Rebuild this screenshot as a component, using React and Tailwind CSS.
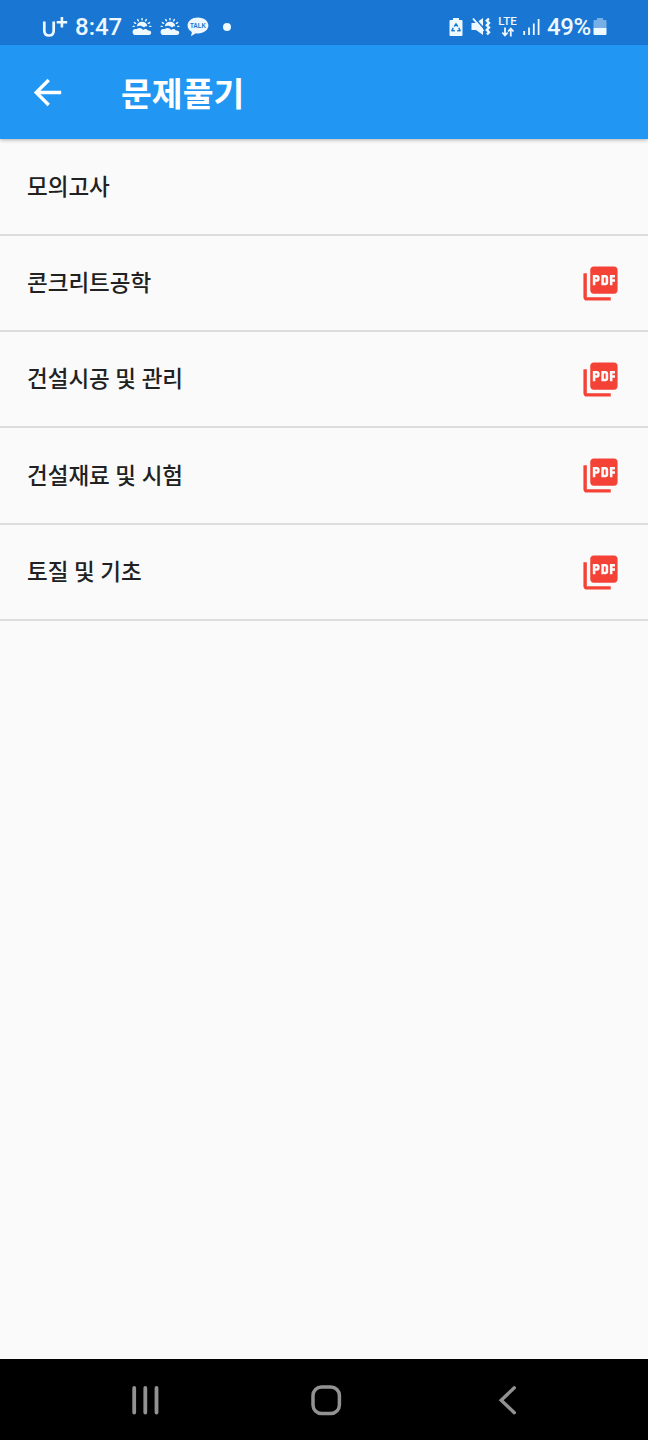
import { MdArrowBack, MdPictureAsPdf } from "react-icons/md";

const subjects = [
  { title: "모의고사", pdf: false, size: "h-[97px]" },
  { title: "콘크리트공학", pdf: true, size: "h-[96px]" },
  { title: "건설시공 및 관리", pdf: true, size: "h-[96px]" },
  { title: "건설재료 및 시험", pdf: true, size: "h-[97px]" },
  { title: "토질 및 기초", pdf: true, size: "h-[96px]" },
];

function Weather() {
  return (
    <svg className="h-[18px] w-[20px]" viewBox="0 0 20 18" fill="none">
      <path d="M4.800 8.400a5.300 5.300 0 0 1 10.500 0c-1.500-.2-2.500.3-3.300 1.200-2-2-4.700-2.200-7.200-1.200z" fill="#eef8ff" />
      <path d="M10 .5v1.300M5.700 1.600l.7 1.200M14.300 1.600l-.7 1.200M2.400 4.600l1.200.7M17.600 4.600l-1.200.7M1.200 8.400h1M17.800 8.400h1" stroke="#eef8ff" strokeWidth="1.400" strokeLinecap="round" />
      <path d="M3.800 17a3 3 0 0 1-.4-6c.6-.1 1 0 1.400.1 2.200-1.900 5-1.100 6.300 1 1.500-1.700 4.200-1.200 4.800.5 2-.2 3.300.7 3.300 2.200S18.100 17 16.800 17z" fill="#eef8ff" />
    </svg>
  );
}

function Talk() {
  return (
    <svg className="h-[20px] w-[22px]" viewBox="0 0 22 20">
      <path d="M11 .5C5.200.5.600 4 .600 8.500c0 2.700 1.700 5 4.300 6.500L4 19.300l4.800-3.100c.7.100 1.400.2 2.200.2 5.800 0 10.400-3.500 10.400-7.900S16.800.5 11 .5z" fill="#eef8ff" />
      <text x="11" y="10.900" textAnchor="middle" textLength="16" lengthAdjust="spacingAndGlyphs" fontSize="6.500" fontWeight="700" fontFamily="Liberation Sans, sans-serif" fill="#1976d2">TALK</text>
    </svg>
  );
}

function BatterySaver() {
  return (
    <svg className="h-[20px] w-[14px]" viewBox="0 0 14 20" fill="none">
      <path d="M4 1h6v2h2.500q1 0 1 1v14q0 1-1 1h-11q-1 0-1-1V4q0-1 1-1H4z" fill="#eef8ff" />
      <path d="M5.200 9.500L7 7l1.800 2.500M9.800 10.800l1.200 2.700-2.800.2M5.800 13.700L3 13.500l1.200-2.700" stroke="#1976d2" strokeWidth="1.500" />
    </svg>
  );
}

function MuteVibrate() {
  return (
    <svg className="h-[20px] w-[20px]" viewBox="0 0 20 20" fill="none">
      <path d="M.5 6h4.500L12 1v17l-7-5H.5z" fill="#eef8ff" />
      <path d="M4 1.500L13 11.500" stroke="#1976d2" strokeWidth="1.600" />
      <path d="M2 1.500L12.500 14" stroke="#eef8ff" strokeWidth="1.900" />
      <path d="M18 1.500l-2.200 2.100L18 6l-2.200 2.300L18 10.600l-2.200 2.300L18 15.200l-2 2.300" stroke="#eef8ff" strokeWidth="2.400" />
    </svg>
  );
}

function Arrows() {
  return (
    <svg className="h-[10px] w-[14px]" viewBox="0 0 14 10" fill="none">
      <path d="M4 .5V8M1.300 5.500L4 8.500l2.700-3M9.800 9.500V2M7.100 4.500l2.700-3 2.700 3" stroke="#eef8ff" strokeWidth="1.800" />
    </svg>
  );
}

function Lte() {
  return (
    <div className="flex w-[19px] flex-col items-center">
      <span className="text-[11.500px] leading-[11px] font-medium">LTE</span>
      <Arrows />
    </div>
  );
}

function Signal() {
  return (
    <svg className="h-[18px] w-[17px]" viewBox="0 0 17 18" stroke="#eef8ff" strokeWidth="1.800">
      <path d="M1.200 13v4M6 9.500V17M10.800 5.500V17M15.600 1v16" />
    </svg>
  );
}

function Battery() {
  return (
    <svg className="h-[19px] w-[14px]" viewBox="0 0 14 19">
      <path d="M4 1h6v2h2.500q1 0 1 1v7H.5V4q0-1 1-1H4z" fill="#78b0e6" />
      <path d="M.5 11h13v6q0 1-1 1h-11q-1 0-1-1z" fill="#eef8ff" />
    </svg>
  );
}

function StatusBar() {
  return (
    <div className="relative z-10 flex h-[45px] shrink-0 items-center bg-[#1976d2] pt-[8px] pr-[41px] pl-[41px] font-['Roboto',sans-serif] text-[24px] font-medium text-[#eef8ff]">
      <svg className="h-[24px] w-[28px]" viewBox="0 0 28 24" fill="none" stroke="#eef8ff">
        <path d="M3.300 6.500V15.500q0 5 4.700 5t4.700-5V6.500" strokeWidth="2.700" />
        <path d="M20.900 2v10.500M15.700 7.200h10.500" strokeWidth="2.600" />
      </svg>
      <span className="ml-[6px] w-[48px] leading-none">8:47</span>
      <div className="ml-[9px] flex items-center gap-[8px]">
        <Weather />
        <Weather />
      </div>
      <div className="ml-[7px]"><Talk /></div>
      <span className="ml-[14px] size-[8px] rounded-full bg-[#eef8ff]" />
      <div className="ml-auto flex items-center">
        <BatterySaver />
        <div className="ml-[8px]"><MuteVibrate /></div>
        <div className="ml-[7px]"><Lte /></div>
        <div className="ml-[6px]"><Signal /></div>
        <span className="ml-[7px] w-[46px] leading-none tracking-[-0.4px] whitespace-nowrap">49%</span>
        <Battery />
      </div>
    </div>
  );
}

function NavigationBar() {
  return (
    <nav className="flex h-[81px] shrink-0 items-center bg-black pl-[130px]">
      <svg className="h-[34px] w-[30px]" viewBox="0 0 30 34" fill="none" stroke="#929292" strokeWidth="3.800" strokeLinecap="round">
        <path d="M4.200 5v24.500M15.300 5v24.500M26.500 5v24.500" />
      </svg>
      <svg className="ml-[149px] h-[34px] w-[34px]" viewBox="0 0 34 34" fill="none" stroke="#929292" strokeWidth="3.500">
        <rect x="4" y="4" width="26.400" height="26.400" rx="8.500" />
      </svg>
      <svg className="ml-[152px] h-[34px] w-[24px]" viewBox="0 0 24 34" fill="none" stroke="#929292" strokeWidth="3.400" strokeLinecap="round">
        <path d="M19.300 4.800L6.200 17.200l13.100 12.500" />
      </svg>
    </nav>
  );
}

export default function App() {
  return (
    <div className="flex h-[1440px] w-[648px] flex-col bg-[#fafafa] font-['Noto_Sans_CJK_KR',sans-serif]">
      <StatusBar />
      <header className="flex h-[94px] shrink-0 items-center bg-[#2196f3] pl-[27px] text-white shadow-[0_1px_4px_rgba(0,0,0,0.3)]">
        <MdArrowBack className="size-[41px]" />
        <h1 className="ml-[53px] text-[33.500px] leading-none font-bold">문제풀기</h1>
      </header>
      <ul className="flex-1">
        {subjects.map(({ title, pdf, size }) => (
          <li key={title} className={`flex items-center justify-between border-b-2 border-[#dddddd] pr-[27px] pl-[27px] ${size}`}>
            <span className="pb-[3px] text-[22.500px] leading-none font-medium text-[#212121] [word-spacing:0.5px]">{title}</span>
            {pdf && <MdPictureAsPdf className="size-[41px] text-[#f44336]" />}
          </li>
        ))}
      </ul>
      <NavigationBar />
    </div>
  );
}
